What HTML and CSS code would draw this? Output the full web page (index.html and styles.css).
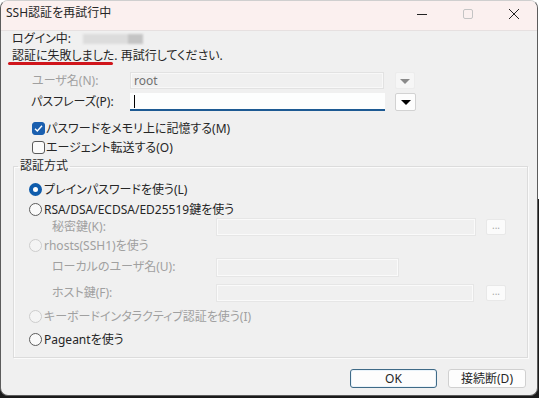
FILE: index.html
```html
<!DOCTYPE html>
<html lang="ja">
<head>
    <meta charset="UTF-8">
    <title>SSH認証を再試行中</title>
    <link rel="stylesheet" href="styles.css">
</head>
<body>
    <div class="window">
        <div class="titlebar">
            <span class="title">SSH認証を再試行中</span>
            <div class="controls">
                <span class="ctl">
                    <svg width="12" height="12" viewBox="0 0 12 12"><path d="M1 6.5h10" stroke="#222" stroke-width="1"/></svg>
                </span>
                <span class="ctl">
                    <svg width="12" height="12" viewBox="0 0 12 12"><rect x="1.5" y="1.5" width="9" height="9" rx="1.5" fill="none" stroke="#c4c4c4"/></svg>
                </span>
                <span class="ctl">
                    <svg width="12" height="12" viewBox="0 0 12 12"><path d="M1 1l10 10M11 1L1 11" stroke="#222" stroke-width="1"/></svg>
                </span>
            </div>
        </div>

        <div class="content">
            <p class="info first">ログイン中: <span class="masked"><i></i><b></b></span></p>
            <p class="info second"><span class="mark">認証に失敗しました.</span> 再試行してください.</p>

            <div class="field field-user disabled">
                <span class="label">ユーザ名(N):</span>
                <span class="input input-user">root</span>
                <span class="drop drop-off"><i class="arrow"></i></span>
            </div>
            <div class="field field-pass">
                <span class="label">パスフレーズ(P):</span>
                <span class="input input-pass"><span class="caret"></span></span>
                <span class="drop drop-on"><i class="arrow"></i></span>
            </div>

            <div class="check-row cb-first">
                <span class="box on">
                    <svg width="9" height="9" viewBox="0 0 9 9"><path d="M1 4.8l2.3 2.2L8 1.8" fill="none" stroke="#fff" stroke-width="1.4"/></svg>
                </span>
                <span>パスワードをメモリ上に記憶する(M)</span>
            </div>
            <div class="check-row cb-second">
                <span class="box"></span>
                <span>エージェント転送する(O)</span>
            </div>

            <fieldset class="group">
                <legend>認証方式</legend>
                <div class="group-inner">
                    <div class="radio-row r1"><span class="radio on"></span><span>プレインパスワードを使う(L)</span></div>
                    <div class="radio-row r2"><span class="radio"></span><span>RSA/DSA/ECDSA/ED25519鍵を使う</span></div>
                    <div class="sub-row k-row disabled">
                        <span class="sub-label">秘密鍵(K):</span>
                        <span class="input input-off wide"></span>
                        <span class="browse">...</span>
                    </div>
                    <div class="radio-row r3 disabled"><span class="radio"></span><span>rhosts(SSH1)を使う</span></div>
                    <div class="sub-row u-row disabled">
                        <span class="sub-label">ローカルのユーザ名(U):</span>
                        <span class="input input-off short"></span>
                    </div>
                    <div class="sub-row h-row disabled">
                        <span class="sub-label">ホスト鍵(F):</span>
                        <span class="input input-off host"></span>
                        <span class="browse">...</span>
                    </div>
                    <div class="radio-row r4 disabled"><span class="radio"></span><span>キーボードインタラクティブ認証を使う(I)</span></div>
                    <div class="radio-row r5"><span class="radio"></span><span>Pageantを使う</span></div>
                </div>
            </fieldset>

            <div class="actions">
                <button class="btn btn-default">OK</button>
                <button class="btn">接続断(D)</button>
            </div>
        </div>
    </div>
</body>
</html>
```

FILE: styles.css
```css
html, body {
    margin: 0;
    height: 100%;
}

body {
    background: linear-gradient(#ffffff 50%, #1b1b1b 50%);
    font-family: "Noto Sans", "Noto Sans CJK JP", sans-serif;
    font-size: 12px;
    font-feature-settings: "palt";
    color: #262626;
}

.window {
    box-sizing: border-box;
    width: 538px;
    height: 396px;
    background: #f0f0f0;
    border: 1px solid #5c5c5c;
    border-top-color: #cfcfcf;
    border-radius: 8px;
    overflow: hidden;
}

.titlebar {
    height: 29px;
    background: #fbf0ef;
    border-bottom: 1px solid #e6e0e0;
    display: flex;
    justify-content: space-between;
}

.title {
    padding: 5px 0 0 5px;
    line-height: 14px;
}

.controls {
    display: flex;
}

.ctl {
    width: 46px;
    display: flex;
    justify-content: center;
    padding-top: 7px;
}

.content {
    padding: 0 0 0 11px;
}

.info {
    margin: 0;
    line-height: 13px;
    white-space: nowrap;
}

.info.first {
    margin-top: 1px;
}

.info.second {
    margin-top: 4px;
}

.masked {
    display: inline-flex;
    vertical-align: -1px;
    margin-left: 9px;
    filter: blur(1.2px);
}

.masked i {
    width: 45px;
    height: 10px;
    background: #dcdcdc;
}

.masked b {
    width: 15px;
    height: 10px;
    background: #c4c4c4;
}

.mark {
    position: relative;
}

.mark::after {
    content: "";
    position: absolute;
    left: -4px;
    width: 105px;
    top: 15px;
    height: 3px;
    border-radius: 2px;
    background: #d0151b;
}

/* user / passphrase rows */

.field {
    display: flex;
    align-items: center;
    padding-left: 20px;
}

.field-user {
    height: 17px;
    margin-top: 10px;
}

.field-pass {
    height: 18px;
    margin-top: 4px;
}

.label {
    width: 98px;
    line-height: 14px;
}

.field-pass .label {
    margin-left: -1px;
    width: 99px;
}

.disabled {
    color: #a0a0a0;
}

.input {
    box-sizing: border-box;
    display: flex;
    align-items: center;
    line-height: 14px;
}

.input-user {
    width: 254px;
    height: 17px;
    padding-left: 3px;
    color: #707070;
    border: 1px solid #e2e2e2;
    box-shadow: inset 0 0 0 1px #f8f8f8;
}

.input-pass {
    width: 255px;
    height: 18px;
    padding-left: 4px;
    background: #fdfefe;
    border-bottom: 2px solid #1d5a93;
}

.caret {
    width: 1px;
    height: 13px;
    background: #000;
}

.drop {
    box-sizing: border-box;
    display: flex;
    justify-content: center;
    align-items: center;
    border-radius: 2px;
}

.drop-off {
    width: 20px;
    height: 17px;
    margin-left: 11px;
    background: #f6f6f6;
    border: 1px solid #ececec;
    color: #8a8a8a;
}

.drop-on {
    width: 21px;
    height: 18px;
    margin-left: 10px;
    background: #fdfdfd;
    border: 1px solid #d2d2d2;
    color: #000;
}

.arrow {
    width: 0;
    height: 0;
    border-left: 5px solid transparent;
    border-right: 5px solid transparent;
    border-top: 5px solid currentColor;
    margin-top: 1px;
}

/* checkboxes */

.check-row {
    display: flex;
    align-items: center;
    height: 14px;
    padding-left: 20px;
    gap: 1px;
}

.cb-first {
    margin-top: 10px;
}

.cb-second {
    margin-top: 5px;
}

.box {
    box-sizing: border-box;
    width: 13px;
    height: 13px;
    border: 1px solid #5a5a5a;
    border-radius: 3px;
    background: #fbfbfb;
    display: flex;
    justify-content: center;
    align-items: center;
}

.box.on {
    background: #1a5faf;
    border-color: #1a5faf;
}

/* group box */

.group {
    margin: 5px 0 0 1px;
    padding: 0;
    width: 515px;
    box-sizing: border-box;
    border: 1px solid #dcdcdc;
    box-shadow: inset 1px 1px 0 #fbfbfb, 1px 1px 0 #fbfbfb;
}

.group legend {
    margin-left: 4px;
    padding: 0 2px;
    line-height: 14px;
    color: #262626;
}

.group-inner {
    padding: 9px 0 11px 15px;
}

.radio-row {
    display: flex;
    align-items: center;
    height: 14px;
    gap: 2px;
}

.r2 { margin-top: 6px; }
.r3 { margin-top: 2px; }
.r4 { margin-top: 7px; }
.r5 { margin-top: 9px; }

.radio {
    box-sizing: border-box;
    width: 13px;
    height: 13px;
    border: 1px solid #5c5c5c;
    border-radius: 50%;
    background: #fafafa;
}

.radio.on {
    border: 4px solid #0f5cac;
    background: #ffffff;
}

.disabled .radio {
    border-color: #cdcdcd;
    background: #f4f4f4;
}

.sub-row {
    display: flex;
    align-items: center;
    height: 18px;
    padding-left: 23px;
}

.k-row { margin-top: 2px; }
.u-row { margin-top: 6px; }
.h-row { margin-top: 8px; }

.sub-label {
    width: 164px;
    line-height: 14px;
}

.input-off {
    height: 18px;
    border: 1px solid #e6e6e6;
    box-shadow: inset 0 0 0 1px #fafafa;
}

.input-off.wide { width: 260px; }
.input-off.short { width: 183px; height: 19px; }
.input-off.host { width: 258px; }

.browse {
    box-sizing: border-box;
    width: 20px;
    height: 16px;
    margin-left: 10px;
    background: #fbfbfb;
    border: 1px solid #e8e8e8;
    border-radius: 2px;
    color: #a8a8a8;
    font-size: 10px;
    line-height: 10px;
    text-align: center;
}

.h-row .browse {
    margin-left: 12px;
}

/* buttons */

.actions {
    display: flex;
    justify-content: flex-end;
    gap: 11px;
    margin-top: 11px;
    padding-right: 11px;
}

.btn {
    box-sizing: border-box;
    height: 19px;
    padding: 0;
    font: inherit;
    font-size: 12px;
    line-height: 14px;
    color: #262626;
    background: #fdfdfd;
    border: 1px solid #d0d0d0;
    border-radius: 3px;
    width: 78px;
}

.btn-default {
    width: 87px;
    border-color: #3f6a87;
    box-shadow: inset 0 0 0 1px #e9f3fa;
}
```
